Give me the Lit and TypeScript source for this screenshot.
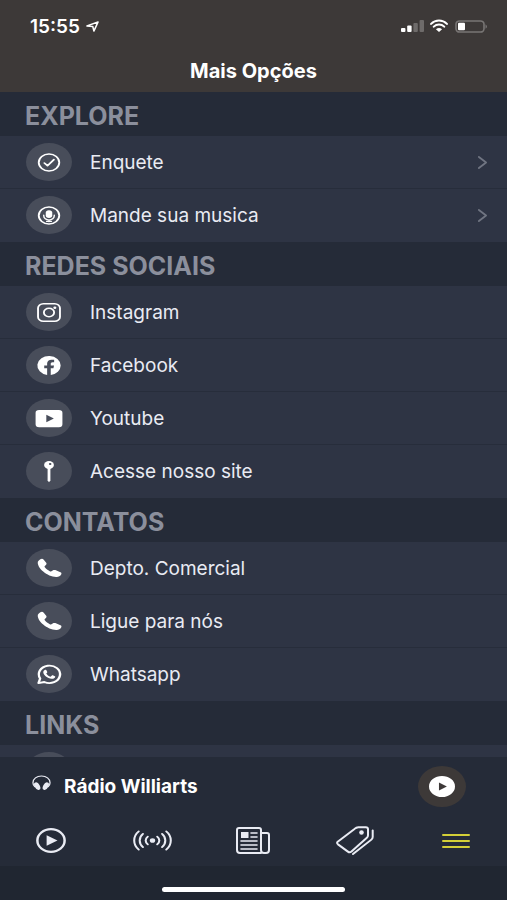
import { LitElement, css, html, svg, nothing } from "lit";
import type { SVGTemplateResult } from "lit";
import { customElement, property } from "lit/decorators.js";

const icons: Record<string, SVGTemplateResult> = {
  check: svg`<g class="line"><circle cx="12" cy="12" r="8.8"/><path d="M8 12.6l2.7 2.7L16.2 9"/></g>`,
  mic: svg`<circle class="line" cx="12" cy="12" r="8.8"/><rect x="9.2" y="6.4" width="5.6" height="8.2" rx="2.8"/><path class="thin" d="M7.5 11.6v.6a4.5 4.5 0 0 0 9 0v-.6M12 16.5v2M10 18.2h4"/>`,
  instagram: svg`<g class="line"><rect x="2.600" y="2.800" width="18.800" height="18.400" rx="4.600"/><circle cx="12" cy="12" r="4.400"/></g><circle cx="17" cy="7" r="1.300"/>`,
  facebook: svg`<path d="M22 12a10 10 0 1 0-11.600 9.900v-7H7.900V12h2.500V9.800c0-2.500 1.500-3.900 3.800-3.900 1.100 0 2.200.2 2.200.2v2.500h-1.300c-1.200 0-1.600.8-1.600 1.600V12h2.800l-.5 2.900h-2.300v7A10 10 0 0 0 22 12z"/>`,
  youtube: svg`<path fill-rule="evenodd" d="M3.500 3H20.500Q23.500 3 23.500 6V18Q23.500 21 20.500 21H3.500Q.5 21 .5 18V6Q.5 3 3.500 3zM9.700 8v8l6.500-4z"/>`,
  pin: svg`<circle cx="12" cy="5.200" r="4.200"/><path d="M10.800 8h2.400v13.500l-1.200 1.700-1.200-1.700z"/><circle class="hole" cx="13" cy="4.200" r="1.100"/>`,
  phone: svg`<path transform="translate(.4 .2) scale(.93)" d="M2.200 5.200C3 3.400 4.200 2.200 5.400 1.900c.9-.2 1.600 0 2.200.9l2.300 3.500c.5.900.3 1.700-.3 2.400l-1 1.200c-.4.500-.4.900 0 1.500 1.300 1.900 2.700 3.200 4.600 4.400.6.400 1 .4 1.500 0l1.200-1c.7-.6 1.500-.7 2.400-.3l4.700 2.400c.9.500 1.200 1.200.8 2.200-.8 1.900-2.400 3-4.300 3.100C11.500 22.600 1 12 2.200 5.200z"/>`,
  whatsapp: svg`<path class="bold" d="M3 21l1.400-4.800A9.100 9.100 0 1 1 8 19.800z"/><path d="M8.700 7.100c.5-.2.900 0 1.100.5l.7 1.700c.1.300 0 .6-.9 1.600.9 1.700 2 2.700 3.800 3.500l1.100-1.300c.2-.3.500-.3.800-.2l1.700.8c.4.200.4.500.3.900-.3 1.400-1.700 2.100-3 1.900-3.700-.6-7-3.600-7.200-6.800 0-1.100.6-2.200 1.600-2.600z"/>`,
  link: svg`<circle class="line" cx="12" cy="12" r="8.800"/>`,
  headphones: svg`<path class="line" d="M3.500 17.500C1.800 15.500 1.200 13.500 1.200 11.500 1.200 5.500 6 1.500 12 1.500S22.800 5.500 22.800 11.500C22.800 13.500 22.200 15.500 20.500 17.500"/><ellipse cx="6.600" cy="16.600" rx="3.300" ry="6" transform="rotate(-24 6.600 16.600)"/><ellipse cx="17.400" cy="16.600" rx="3.300" ry="6" transform="rotate(24 17.400 16.600)"/>`,
  play: svg`<circle class="bold" cx="12" cy="12" r="10.900"/><path d="M8.500 7v10l8.700-5z"/>`,
  disc: svg`<path fill-rule="evenodd" d="M12 0a12 12 0 1 0 0 24 12 12 0 0 0 0-24zM9.200 7.400l7.300 4.600-7.300 4.600z"/>`,
  live: svg`<circle cx="18" cy="12" r="2.600"/><g class="bold"><path d="M13.400 7.500a6 6 0 0 0 0 9M22.600 7.500a6 6 0 0 1 0 9M8.700 4.500a10.500 10.500 0 0 0 0 15M27.300 4.500a10.500 10.500 0 0 1 0 15M4.600 1.600a14.500 14.500 0 0 0 0 20.800M31.400 1.600a14.500 14.500 0 0 1 0 20.800"/></g>`,
  news: svg`<g class="bold"><path d="M25 26H4a3 3 0 0 1-3-3V3a2 2 0 0 1 2-2h20a2 2 0 0 1 2 2v20a3 3 0 0 0 3 3h2a3 3 0 0 0 3-3V8a2 2 0 0 0-2-2h-6"/></g><rect x="5" y="5" width="7.500" height="6"/><path class="line" d="M15 6h6M15 10h6M5 14h16M5 18h16M5 22h16"/>`,
  tags: svg`<g class="bold"><path d="M1.700 16.200L18.500 3q1.800-1.600 3.800-1.700h7.500q2.200 0 2.200 2v6.200q0 1.800-1.400 3L15.500 26.300q-1.800 1.600-3.600.2L2 19q-1.700-1.400-.3-2.800zM36.700 4.500v7q0 1.500-1.300 2.600L17 29"/></g><circle cx="25.500" cy="6.800" r="2.300"/>`,
  menu: svg`<path class="bold" d="M1 2h26M1 8h26M1 14h26"/>`,
  arrow: svg`<path class="line" d="M1 5.500L13 1 8.500 11 7.300 6z"/>`,
  chevron: svg`<path class="bold" d="M1 1l8 6-8 6"/>`,
  signal: svg`<rect y="8" width="4.500" height="4" rx="1"/><rect x="6.300" y="5.500" width="4.500" height="6.500" rx="1"/><g opacity=".25"><rect x="12.600" y="3" width="4.500" height="9" rx="1"/><rect x="18.900" width="4.500" height="12" rx="1"/></g>`,
  wifi: svg`<path d="M10 12L6.600 9.200a5.600 5.600 0 0 1 6.800 0z"/><path class="bold" d="M4 6.700a9.500 9.500 0 0 1 12 0M1 3.900a14 14 0 0 1 18 0"/>`,
  battery: svg`<g opacity=".3"><rect class="line" x="1" y="1" width="28" height="12" rx="3.500"/><path d="M30.500 4.500v5q3-2.500 0-5z"/></g><rect x="3" y="3" width="7" height="8" rx="1"/>`,
};

@customElement("app-icon")
class AppIcon extends LitElement {
  @property() name = "";
  @property() box = "0 0 24 24";

  static styles = css`
    :host { display: block; flex: none; }
    svg { display: block; width: 100%; height: 100%; overflow: visible; fill: currentColor; }
    .line, .bold, .thin { fill: none; stroke: currentColor; stroke-linecap: round; stroke-linejoin: round; }
    .line { stroke-width: 1.6; }
    .bold { stroke-width: 2; }
    .thin { stroke-width: 1.2; }
    .hole { fill: #484d5a; }
  `;

  render() {
    return html`<svg viewBox=${this.box} preserveAspectRatio="none" aria-hidden="true">${icons[this.name]}</svg>`;
  }
}

interface Item { label: string; icon: string; more?: boolean }

const sections: { title: string; items: Item[] }[] = [
  { title: "EXPLORE", items: [
    { label: "Enquete", icon: "check", more: true },
    { label: "Mande sua musica", icon: "mic", more: true },
  ] },
  { title: "REDES SOCIAIS", items: [
    { label: "Instagram", icon: "instagram" },
    { label: "Facebook", icon: "facebook" },
    { label: "Youtube", icon: "youtube" },
    { label: "Acesse nosso site", icon: "pin" },
  ] },
  { title: "CONTATOS", items: [
    { label: "Depto. Comercial", icon: "phone" },
    { label: "Ligue para nós", icon: "phone" },
    { label: "Whatsapp", icon: "whatsapp" },
  ] },
  { title: "LINKS", items: [{ label: "", icon: "link" }] },
];

const tabs = [
  { icon: "play", label: "Ao vivo", box: "0 0 24 24" },
  { icon: "live", label: "Transmissão", box: "0 0 36 24" },
  { icon: "news", label: "Notícias", box: "0 0 34 27" },
  { icon: "tags", label: "Promoções", box: "0 0 38 30" },
  { icon: "menu", label: "Mais opções", box: "0 0 28 16" },
];

@customElement("app-root")
class AppRoot extends LitElement {
  static styles = css`
    :host {
      display: flex; flex-direction: column; height: 100vh; overflow: hidden;
      background: #252b38; color: #e9ebf3;
      font-family: Inter, "Liberation Sans", sans-serif; font-size: 19px; font-optical-sizing: none;
    }
    * { box-sizing: border-box; }
    h1, h2, ul { margin: 0; padding: 0; }
    button { border: 0; padding: 0; background: none; color: inherit; font: inherit; }
    .top { flex: none; background: #3d3938; color: #fff; }
    .status { display: flex; align-items: center; height: 52px; padding: 0 20px 0 30px; }
    .time { font-size: 19px; font-weight: 600; margin-right: 6px; }
    .gps { width: 13px; height: 11px; margin-right: auto; }
    .signal { width: 23px; height: 12px; margin-right: 6px; }
    .wifi { width: 18px; height: 12px; margin-right: 7px; }
    .battery { width: 32px; height: 13px; }
    h1 { height: 40px; line-height: 38px; font-size: 20px; font-weight: 700; text-align: center; }
    main { flex: 1; min-height: 0; overflow: hidden; }
    h2 { height: 44px; padding: 0 25px; line-height: 48px; font-size: 25px; font-weight: 700; color: #8b8f9c; }
    ul { list-style: none; background: #2e3444; }
    li { border-bottom: 1px solid #272d3b; }
    li:last-child { border-color: #2e3444; }
    .item { display: flex; align-items: center; height: 52px; padding: 0 20px 0 26px; color: inherit; text-decoration: none; }
    .bubble { display: grid; place-items: center; flex: none; width: 46px; height: 38px; margin-right: 18px; border-radius: 50%; background: #484d5a; color: #fff; }
    .glyph { width: 28px; height: 23px; }
    .label { flex: 1; }
    .chevron { width: 9px; height: 13px; color: #707582; }
    .player { display: flex; align-items: center; flex: none; height: 58px; padding: 0 41px 0 32px; }
    .phones { width: 19px; height: 16px; margin: 0 13px 6px 0; }
    .station { flex: 1; font-size: 19px; font-weight: 700; color: #fff; }
    .toggle { display: grid; place-items: center; width: 48px; height: 41px; border-radius: 50%; background: #3d3938; color: #fff; }
    .disc { width: 26px; height: 21px; }
    nav { display: grid; grid-template-columns: repeat(5, 1fr); flex: none; height: 51px; }
    .tab { display: grid; place-items: center; }
    .play { width: 30px; height: 25px; }
    .live { width: 37px; height: 21px; }
    .news { width: 34px; height: 27px; }
    .tags { width: 38px; height: 29px; }
    .menu { width: 28px; height: 16px; color: #d3cf37; }
    .home { display: flex; align-items: center; justify-content: center; flex: none; height: 34px; padding-top: 12px; background: #202631; }
    .bar { width: 36%; height: 5px; border-radius: 3px; background: #fff; }
  `;

  render() {
    return html`
      <header class="top">
        <div class="status">
          <span class="time">15:55</span>
          <app-icon class="gps" name="arrow" box="0 0 14 12"></app-icon>
          <app-icon class="signal" name="signal" box="0 0 23.400 12"></app-icon>
          <app-icon class="wifi" name="wifi" box="0 0 20 12"></app-icon>
          <app-icon class="battery" name="battery" box="0 0 32 14"></app-icon>
        </div>
        <h1>Mais Opções</h1>
      </header>
      <main>
        ${sections.map((section) => html`
          <section>
            <h2>${section.title}</h2>
            <ul>
              ${section.items.map((item) => html`
                <li>
                  <a class="item" href="#">
                    <span class="bubble"><app-icon class="glyph" name=${item.icon}></app-icon></span>
                    <span class="label">${item.label}</span>
                    ${item.more ? html`<app-icon class="chevron" name="chevron" box="0 0 10 14"></app-icon>` : nothing}
                  </a>
                </li>`)}
            </ul>
          </section>`)}
      </main>
      <div class="player">
        <app-icon class="phones" name="headphones"></app-icon>
        <span class="station">Rádio Williarts</span>
        <button class="toggle" aria-label="Tocar"><app-icon class="disc" name="disc"></app-icon></button>
      </div>
      <nav>
        ${tabs.map((tab) => html`
          <button class="tab" aria-label=${tab.label}>
            <app-icon class=${tab.icon} name=${tab.icon} box=${tab.box}></app-icon>
          </button>`)}
      </nav>
      <div class="home"><div class="bar"></div></div>
    `;
  }
}
